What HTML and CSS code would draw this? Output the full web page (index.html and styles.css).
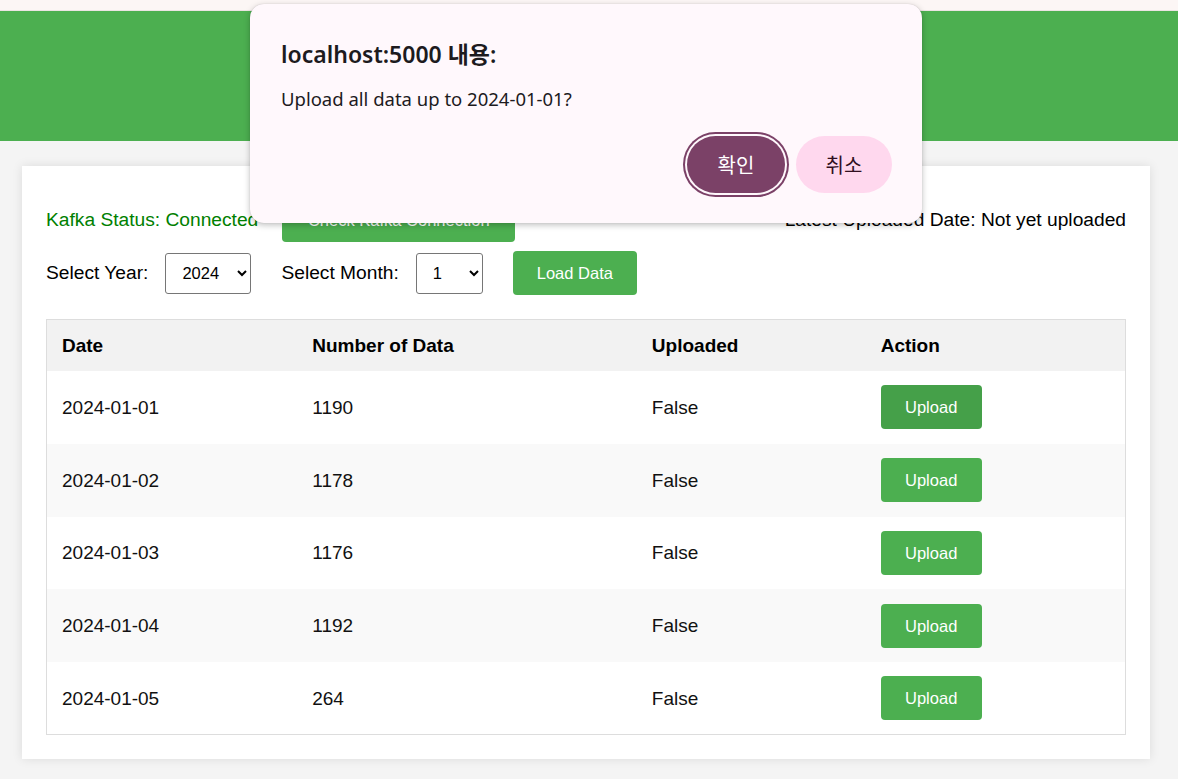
FILE: index.html
```html
<!DOCTYPE html>
<html lang="en">
<head>
<meta charset="utf-8">
<title>Kafka Uploader</title>
<link rel="stylesheet" href="styles.css">
</head>
<body>
<div class="topstrip"></div>
<header class="header"></header>
<main class="container">
  <div class="row row-status">
    <span class="status">Kafka Status: Connected</span>
    <button class="btn btn-check">Check Kafka Connection</button>
    <span class="latest">Latest Uploaded Date: Not yet uploaded</span>
  </div>
  <div class="row row-select">
    <label class="lbl">Select Year:</label>
    <select class="sel sel-year"><option>2024</option></select>
    <label class="lbl">Select Month:</label>
    <select class="sel sel-month"><option>1</option></select>
    <button class="btn">Load Data</button>
  </div>
  <table class="data">
    <thead>
      <tr><th class="c-date">Date</th><th class="c-num">Number of Data</th><th class="c-up">Uploaded</th><th class="c-act">Action</th></tr>
    </thead>
    <tbody>
      <tr><td>2024-01-01</td><td>1190</td><td>False</td><td><button class="btn btn-up btn-hover">Upload</button></td></tr>
      <tr><td>2024-01-02</td><td>1178</td><td>False</td><td><button class="btn btn-up">Upload</button></td></tr>
      <tr><td>2024-01-03</td><td>1176</td><td>False</td><td><button class="btn btn-up">Upload</button></td></tr>
      <tr><td>2024-01-04</td><td>1192</td><td>False</td><td><button class="btn btn-up">Upload</button></td></tr>
      <tr><td>2024-01-05</td><td>264</td><td>False</td><td><button class="btn btn-up">Upload</button></td></tr>
    </tbody>
  </table>
</main>

<div class="dialog">
  <div class="dlg-title">localhost:5000 내용:</div>
  <div class="dlg-msg">Upload all data up to 2024-01-01?</div>
  <div class="dlg-actions">
    <button class="dbtn dbtn-ok">확인</button>
    <button class="dbtn dbtn-cancel">취소</button>
  </div>
</div>
</body>
</html>
```
FILE: styles.css
```css
* { box-sizing: border-box; }
html, body { margin: 0; padding: 0; }
body {
  background: #f4f4f4;
  font-family: "Liberation Sans", Arial, sans-serif;
  color: #000;
  width: 1178px;
  height: 779px;
  overflow: hidden;
  position: relative;
}
.topstrip {
  height: 11px;
  background: #fcf6f5;
  border-bottom: 1px solid #ece4e3;
}
.header {
  height: 130px;
  background: #4caf50;
}
.container {
  margin: 25px 0 0 22px;
  width: 1128px;
  background: #fff;
  padding: 32px 24px 24px 24px;
  box-shadow: 0 0 10px rgba(0,0,0,0.1);
}
.row {
  display: flex;
  align-items: center;
  height: 44px;
  font-size: 19.2px;
}
.row-select { margin-top: 9px; }
.status { color: #008000; margin-right: 24px; }
.latest { margin-left: auto; }
.btn {
  background: #4caf50;
  color: #fff;
  border: none;
  border-radius: 4px;
  font-family: "Liberation Sans", Arial, sans-serif;
  font-size: 16.5px;
  line-height: 18px;
  padding: 13px 24px;
  height: 44px;
}
.btn-check { width: 233px; padding: 0; }
.btn-hover { background: #45a049; }
.lbl { margin-right: 17px; }
.sel {
  height: 41px;
  font-family: "Liberation Sans", Arial, sans-serif;
  font-size: 16.5px;
  border: 1px solid #767676;
  border-radius: 3px;
  background: #fff;
  color: #000;
  padding: 0 6px 0 12px;
  margin-right: 30px;
}
.sel-year { width: 86px; }
.sel-month { width: 67px; }
.data {
  margin-top: 24px;
  width: 1080px;
  border-collapse: collapse;
  border: 1px solid #ddd;
  font-size: 19px;
}
.data th, .data td {
  text-align: left;
  padding: 15px 15px;
}
.data th {
  background: #f2f2f2;
  font-weight: bold;
  line-height: 21px;
  height: 51px;
}
.data td { height: 72.8px; padding-top: 14px; padding-bottom: 14px; color: #111; line-height: 21px; }
.data tbody tr:nth-child(even) td { background: #f9f9f9; }
.c-date { width: 251px; }
.c-num { width: 340px; }
.c-up { width: 229px; }
.c-act { width: 260px; }
.btn-up { width: 101px; padding-left: 0; padding-right: 0; }

.dialog {
  position: absolute;
  left: 250px;
  top: 4px;
  width: 672px;
  height: 219px;
  background: #fff8fc;
  border-radius: 14px;
  box-shadow: 0 2px 6px rgba(0,0,0,0.25), 0 0 1px rgba(0,0,0,0.2);
  padding: 34px 30px 0 31px;
  font-family: "Noto Sans", "Noto Sans CJK KR", sans-serif;
  color: #1d1b1e;
}
.dlg-title {
  font-size: 23px;
  font-weight: 600;
  line-height: 32px;
}
.dlg-msg {
  margin-top: 16px;
  font-size: 18.5px;
  line-height: 26px;
}
.dlg-actions {
  display: flex;
  justify-content: flex-end;
  align-items: center;
  margin-top: 24px;
  gap: 11px;
}
.dbtn {
  height: 57px;
  border: none;
  border-radius: 29px;
  font-family: "Noto Sans CJK KR", "Noto Sans", sans-serif;
  font-size: 20px;
  padding: 0;
}
.dbtn-ok {
  width: 98px;
  background: #7b4167;
  color: #fff;
  box-shadow: 0 0 0 2px #fff8fc, 0 0 0 4px #7b4167;
}
.dbtn-cancel {
  width: 96px;
  background: #ffd8ee;
  color: #31101f;
}
```
